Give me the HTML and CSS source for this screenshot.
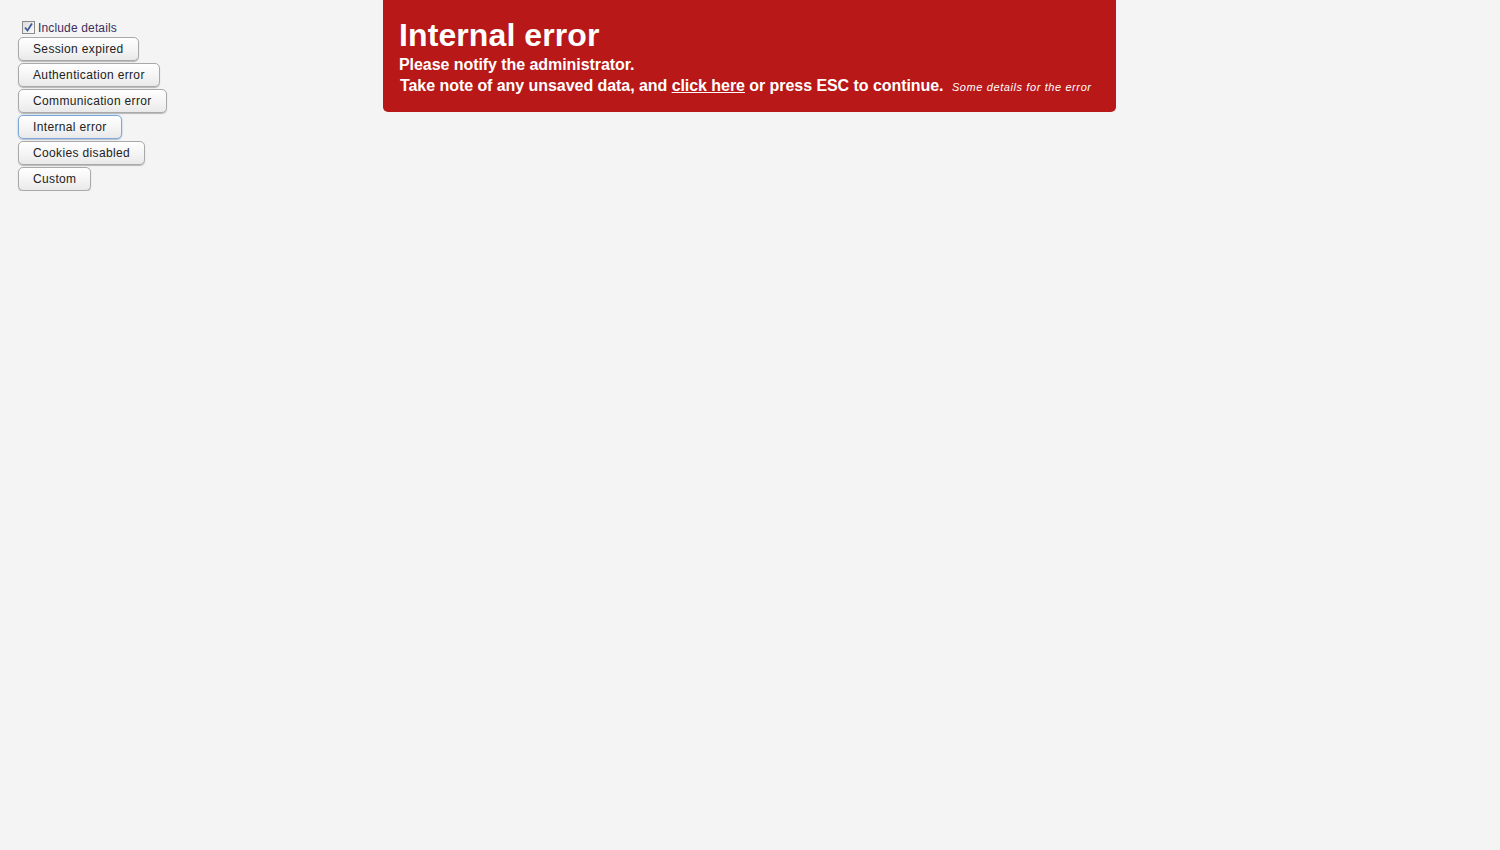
FILE: index.html
```html
<!DOCTYPE html>
<html>
<head>
<meta charset="utf-8">
<link rel="stylesheet" href="styles.css">
</head>
<body>
<div class="panel">
  <label class="check"><span class="box"><svg width="11" height="11" viewBox="0 0 11 11"><path d="M2 5.5 L4.5 8.5 L9 1.5" fill="none" stroke="#3d5a9a" stroke-width="1.8"/></svg></span>Include details</label>
  <button class="btn">Session expired</button>
  <button class="btn">Authentication error</button>
  <button class="btn">Communication error</button>
  <button class="btn focused">Internal error</button>
  <button class="btn">Cookies disabled</button>
  <button class="btn">Custom</button>
</div>
<div class="notice">
  <div class="title">Internal error</div>
  <div class="msg">Please notify the administrator.</div>
  <div class="msg msg2">Take note of any unsaved data, and <span class="link">click here</span> or press ESC to continue. <span class="details">Some details for the error</span></div>
</div>
</body>
</html>
```
FILE: styles.css
```css
html, body {
  margin: 0;
  padding: 0;
  background: #f4f4f4;
  font-family: "Liberation Sans", Arial, sans-serif;
}
.panel {
  display: flex;
  flex-direction: column;
  align-items: flex-start;
  gap: 2px;
  padding: 20px 0 0 18px;
}
.check {
  display: flex;
  align-items: center;
  font-size: 12px;
  letter-spacing: 0.15px;
  color: #3c2f5c;
  margin-left: 4px;
  gap: 3px;
  height: 15px;
}
.box {
  width: 11px;
  height: 11px;
  border: 1px solid #8a8a8a;
  background: linear-gradient(135deg, #dcdcdc, #fbfbfb);
  display: flex;
  align-items: center;
  justify-content: center;
}
.box svg {
  display: block;
}
.btn {
  font-family: "Liberation Sans", Arial, sans-serif;
  font-size: 12px;
  letter-spacing: 0.35px;
  color: #222;
  height: 24px;
  padding: 0 14px 0 14px;
  border: 1px solid #a9a9a9;
  border-radius: 5px;
  background: linear-gradient(#ffffff, #f3f3f3 60%, #e9e9e9);
  box-shadow: 0 1px 1px rgba(0,0,0,0.25);
  text-align: left;
  margin: 0;
}
.btn.focused {
  border-color: #7fa8d8;
  box-shadow: 0 0 2px #9cc2ec, 0 1px 1px rgba(0,0,0,0.2);
}
.notice {
  position: absolute;
  top: 0;
  left: 383px;
  width: 733px;
  box-sizing: border-box;
  height: 112px;
  padding: 16px 16px 0 16px;
  background: #b91818;
  color: #fff;
  border-radius: 0 0 5px 5px;
  font-weight: bold;
}
.title {
  font-size: 32px;
  line-height: 38px;
  letter-spacing: 0.1px;
}
.msg {
  font-size: 16px;
  line-height: 21px;
  letter-spacing: -0.06px;
}
.msg2 {
  padding-left: 1px;
  letter-spacing: -0.055px;
}
.link {
  text-decoration: underline;
}
.details {
  font-size: 11px;
  font-style: italic;
  font-weight: normal;
  letter-spacing: 0.6px;
  margin-left: 4px;
}
```
